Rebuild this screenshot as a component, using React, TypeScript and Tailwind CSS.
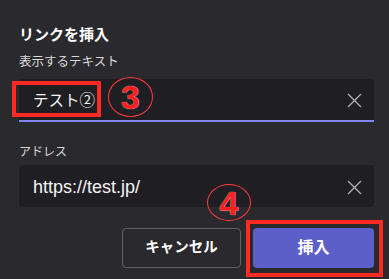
import React from 'react';

const jp = "font-['Segoe_UI','Liberation_Sans','Noto_Sans_CJK_JP',sans-serif]";

function ClearIcon() {
    return (
        <svg width="15" height="15" viewBox="0 0 15 15" className="shrink-0">
            <path d="M1 1 L14 14 M14 1 L1 14" stroke="#b3b3b3" strokeWidth="1.3" fill="none" />
        </svg>
    );
}

function Marker({ n, className }: { n: string; className: string }) {
    return (
        <div className={`absolute flex items-center justify-center rounded-[50%] border border-[#ff3b3b] ${className}`}>
            <span className="font-['Liberation_Sans',sans-serif] text-[34px] font-bold leading-none text-[#ff1f1f] [text-shadow:0_0_1px_#fff]">{n}</span>
        </div>
    );
}

export default function App() {
    return (
        <div className={`relative h-[279px] w-[389px] overflow-hidden bg-[#2a292d] pl-[19px] pr-[15px] pt-[25px] ${jp}`}>
            <h2 className="text-[15px] font-bold leading-[20px] text-white">リンクを挿入</h2>

            <label className="mt-[8px] block text-[12.5px] leading-[18px] text-[#dadada]">表示するテキスト</label>
            <div className="mt-[8px] flex h-[43px] items-center rounded-t-[4px] border-b-2 border-[#7f85f5] bg-[#1f1e22] pl-[14px] pr-[12px] pt-[2px]">
                <span className="flex-1 text-[15.5px] text-[#f5f5f5]">テスト②</span>
                <ClearIcon />
            </div>

            <label className="mt-[21px] block text-[12px] leading-[18px] text-[#dadada]">アドレス</label>
            <div className="mt-[4px] flex h-[42px] items-center rounded-[4px] bg-[#1f1e22] pl-[14px] pr-[12px] pt-[2px]">
                <span className="flex-1 font-['Liberation_Sans',sans-serif] text-[18px] text-[#f5f5f5]">https://test.jp/</span>
                <ClearIcon />
            </div>

            <div className="mt-[21px] flex justify-end gap-[12px]">
                <button className="flex h-[40px] w-[119px] items-center justify-center rounded-[4px] border border-[#616161] text-[14.5px] font-bold text-white">
                    キャンセル
                </button>
                <button className="flex h-[40px] w-[121px] items-center justify-center rounded-[4px] bg-[#5b5fc7] text-[16px] font-bold text-white">
                    挿入
                </button>
            </div>

            {/* annotations */}
            <div className="absolute left-[12px] top-[81px] h-[36px] w-[89px] border-4 border-[#ff2a22]" />
            <div className="absolute left-[246px] top-[220px] h-[57px] w-[137px] border-4 border-[#ff2a22]" />
            <Marker n="3" className="left-[108px] top-[77px] h-[40px] w-[45px]" />
            <Marker n="4" className="left-[207px] top-[184px] h-[37px] w-[44px]" />
        </div>
    );
}
